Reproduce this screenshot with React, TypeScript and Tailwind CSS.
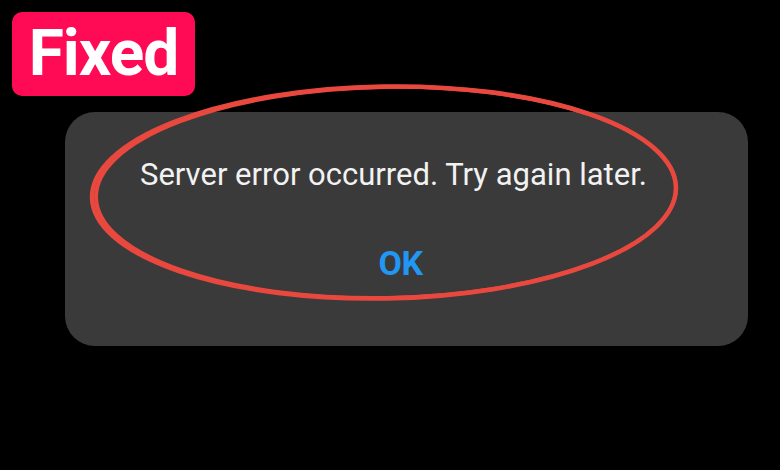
export default function App() {
  return (
    <div className="relative h-[470px] w-[780px] overflow-hidden bg-black font-['Roboto',sans-serif]">
      <div className="flex flex-col items-start pt-[12px]">
        <div className="ml-[12px] flex h-[84px] w-[183px] items-center justify-center rounded-[10px] bg-[#ff0a54]">
          <span className="text-[64px] font-bold leading-none tracking-[-1px] text-white">Fixed</span>
        </div>
        <div className="ml-[65px] mt-[16px] flex h-[234px] w-[683px] flex-col items-center rounded-[30px] bg-[#3a3a3a] pr-[26px] pt-[45px]">
          <p className="text-[31px] leading-[36px] text-[#f2f2f2]">Server error occurred. Try again later.</p>
          <button type="button" className="ml-[14px] mt-[52px] text-[34px] font-bold leading-[36px] tracking-[-0.5px] text-[#2196f3]">
            OK
          </button>
        </div>
      </div>
      {/* red marker ring drawn over the dialog */}
      <svg className="pointer-events-none absolute left-0 top-0" width="780" height="470" viewBox="0 0 780 470">
        <g fill="none" stroke="#e8483e" transform="rotate(-1 384 192.5)">
          <ellipse cx="384" cy="192.5" rx="292" ry="106" strokeWidth="4.5" />
          <ellipse cx="386" cy="192.5" rx="290" ry="105.5" strokeWidth="4" />
        </g>
      </svg>
    </div>
  );
}
